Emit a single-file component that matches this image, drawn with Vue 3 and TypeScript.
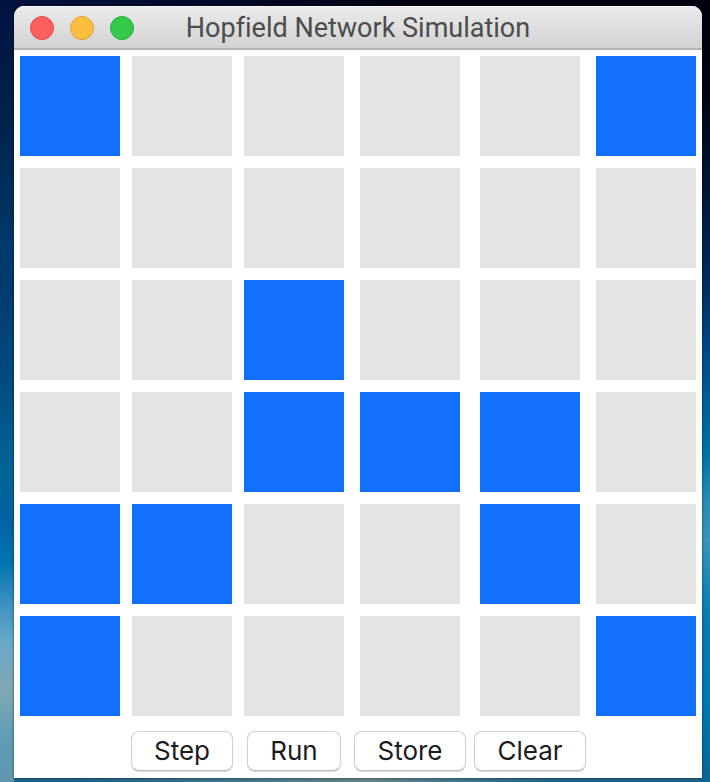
<script setup lang="ts">
import { ref } from 'vue'

const rows = 6
const columns = 6

const initialPattern: number[] = [
  1, 0, 0, 0, 0, 1,
  0, 0, 0, 0, 0, 0,
  0, 0, 1, 0, 0, 0,
  0, 0, 1, 1, 1, 0,
  1, 1, 0, 0, 1, 0,
  1, 0, 0, 0, 0, 1,
]

const cells = ref<boolean[]>(initialPattern.map((value) => value === 1))
const stored = ref<number[][]>([])

function toggle(index: number): void {
  cells.value[index] = !cells.value[index]
}

function spins(): number[] {
  return cells.value.map((on) => (on ? 1 : -1))
}

// Updates one unit from the Hebbian field of the stored patterns.
function update(index: number): boolean {
  const state = spins()
  let field = 0
  for (const pattern of stored.value) {
    state.forEach((spin, other) => {
      if (other !== index) field += pattern[index] * pattern[other] * spin
    })
  }
  if (field === 0) return false
  const next = field > 0
  const changed = next !== cells.value[index]
  cells.value[index] = next
  return changed
}

function step(): void {
  update(Math.floor(Math.random() * rows * columns))
}

function run(): void {
  let changed = true
  for (let sweep = 0; changed && sweep < 100; sweep++) {
    changed = false
    for (let index = 0; index < rows * columns; index++) {
      if (update(index)) changed = true
    }
  }
}

function store(): void {
  stored.value.push(spins())
}

function clear(): void {
  cells.value = cells.value.map(() => false)
}
</script>

<template>
  <div class="desktop">
    <main class="window">
      <header class="titlebar">
        <div class="lights">
          <button type="button" class="light close" aria-label="Close"></button>
          <button type="button" class="light minimize" aria-label="Minimize"></button>
          <button type="button" class="light zoom" aria-label="Zoom"></button>
        </div>
        <h1 class="title">Hopfield Network Simulation</h1>
      </header>
      <section class="columns board" aria-label="Network state">
        <button
          v-for="(on, index) in cells"
          :key="index"
          type="button"
          class="cell"
          :class="{ on }"
          :aria-pressed="on"
          :aria-label="`Unit ${index + 1}`"
          @click="toggle(index)"
        ></button>
      </section>
      <footer class="columns actions">
        <button type="button" class="action first" @click="step">Step</button>
        <button type="button" class="action" @click="run">Run</button>
        <button type="button" class="action" @click="store">Store</button>
        <button type="button" class="action" @click="clear">Clear</button>
      </footer>
    </main>
  </div>
</template>

<style>
body {
  margin: 0;
}
</style>

<style scoped>
.desktop {
  box-sizing: border-box;
  min-height: 100vh;
  padding: 6px 8px 4px 14px;
  font-family: Inter, "Liberation Sans", sans-serif;
  background:
    linear-gradient(to right, transparent 10%, #63848a 52%, transparent 80%) bottom / 100% 4px no-repeat,
    linear-gradient(#000010 0%, #000414 12%, #001838 25%, #00285a 35%, #005090 47%, #0072a4 58%, #2a8cb4 64%, #3a94bc 69%, #0a7eb2 78%, #0078b0 90%, #0b6594 100%) right / 8px 100% no-repeat,
    linear-gradient(#001240 0%, #002248 15%, #003a6c 32%, #003c70 38%, #004c80 49%, #006496 60%, #0060a0 66%, #0074b0 72%, #3a90c0 77%, #68a8c8 82%, #80a8b4 88%, #5c9cb4 95%, #6098b0 100%) left / 14px 100% no-repeat,
    linear-gradient(to right, #001240, #000010 60%) top / 100% 20px no-repeat,
    #1c6288;
}

.window {
  overflow: hidden;
  background: #ffffff;
  border-radius: 10px 10px 0 0;
  box-shadow: 0 0 3px rgba(0, 0, 0, 0.6);
}

.titlebar {
  box-sizing: border-box;
  display: grid;
  grid-template-columns: 1fr auto 1fr;
  align-items: center;
  height: 44px;
  padding: 2px 16px 0;
  background: linear-gradient(#ebebeb, #d2d2d2);
  border-bottom: 2px solid #b4b4b4;
  box-shadow: inset 0 1px #f8f8f8;
}

.lights {
  display: flex;
  gap: 16px;
}

.light {
  box-sizing: border-box;
  width: 24px;
  height: 24px;
  padding: 0;
  border: 1px solid;
  border-radius: 50%;
}

.close {
  background: #fd605c;
  border-color: #e14944;
}

.minimize {
  background: #fdbd40;
  border-color: #dea034;
}

.zoom {
  background: #34c94a;
  border-color: #25ac35;
}

.title {
  margin: 0;
  font-family: Roboto, "Liberation Sans", sans-serif;
  font-size: 27px;
  font-weight: 400;
  font-variant-ligatures: none;
  line-height: 32px;
  color: #4c4c4c;
  white-space: nowrap;
}

.columns {
  display: grid;
  grid-template-columns: 112fr 112fr 112fr 120fr 120fr 112fr;
  justify-items: center;
}

.board {
  grid-auto-rows: 100px;
  row-gap: 12px;
  padding: 6px 0;
}

.cell {
  width: 100px;
  height: 100px;
  padding: 0;
  background: #e4e4e4;
  border: 0;
}

.cell.on {
  background: #1270fb;
}

.actions {
  padding: 9px 0 7px;
}

.action {
  box-sizing: border-box;
  height: 40px;
  padding: 0 22px;
  font-family: inherit;
  font-size: 26px;
  line-height: 38px;
  color: #1c1c1c;
  white-space: nowrap;
  background: #ffffff;
  border: 1px solid #d0d0d0;
  border-bottom-color: #bcbcbc;
  border-radius: 8px;
  box-shadow: 0 1px 1px rgba(0, 0, 0, 0.14);
}

.first {
  grid-column-start: 2;
}

.action:active {
  background: #e8f0fe;
}
</style>
